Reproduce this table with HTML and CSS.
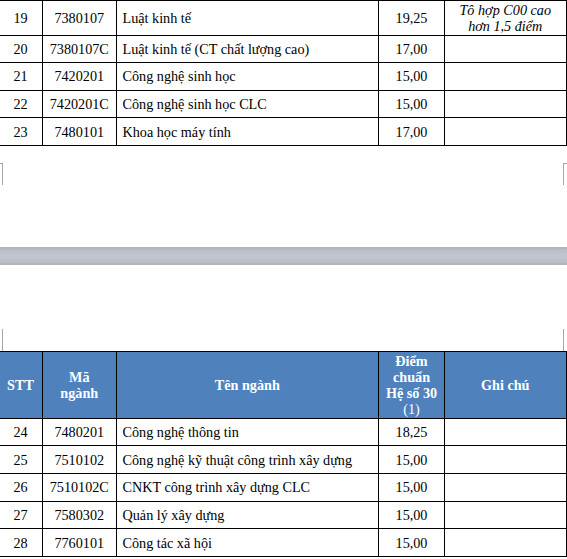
FILE: index.html
```html
<!DOCTYPE html>
<html lang="vi">
<head>
<meta charset="utf-8">
<title>Điểm chuẩn</title>
<link rel="stylesheet" href="styles.css">
</head>
<body>
<div class="sheet">
  <table class="grid">
    <colgroup>
      <col class="c1"><col class="c2"><col class="c3"><col class="c4"><col class="c5">
    </colgroup>
    <tbody>
      <tr class="tall">
        <td class="ctr">19</td><td class="ctr">7380107</td><td class="name">Luật kinh tế</td><td class="ctr">19,25</td><td class="note">Tô hợp C00 cao<br>hơn 1,5 điểm</td>
      </tr>
      <tr class="row">
        <td class="ctr">20</td><td class="ctr">7380107C</td><td class="name">Luật kinh tế (CT chất lượng cao)</td><td class="ctr">17,00</td><td></td>
      </tr>
      <tr class="row">
        <td class="ctr">21</td><td class="ctr">7420201</td><td class="name">Công nghệ sinh học</td><td class="ctr">15,00</td><td></td>
      </tr>
      <tr class="row">
        <td class="ctr">22</td><td class="ctr">7420201C</td><td class="name">Công nghệ sinh học CLC</td><td class="ctr">15,00</td><td></td>
      </tr>
      <tr class="row">
        <td class="ctr">23</td><td class="ctr">7480101</td><td class="name">Khoa học máy tính</td><td class="ctr">17,00</td><td></td>
      </tr>
    </tbody>
  </table>

  <div class="page-end">
    <div class="marks top-marks">
      <span class="mark mark-tl"></span>
      <span class="mark mark-tr"></span>
    </div>
  </div>

  <div class="page-gap"></div>

  <div class="page-start">
    <div class="marks bottom-marks">
      <span class="mark mark-bl"></span>
      <span class="mark mark-br"></span>
    </div>
  </div>

  <table class="grid">
    <colgroup>
      <col class="c1"><col class="c2"><col class="c3"><col class="c4"><col class="c5">
    </colgroup>
    <thead>
      <tr class="head">
        <th>STT</th><th>Mã<br>ngành</th><th>Tên ngành</th><th>Điểm<br>chuẩn<br>Hệ số 30<br><span class="reg">(1)</span></th><th>Ghi chú</th>
      </tr>
    </thead>
    <tbody>
      <tr class="row">
        <td class="ctr">24</td><td class="ctr">7480201</td><td class="name">Công nghệ thông tin</td><td class="ctr">18,25</td><td></td>
      </tr>
      <tr class="row">
        <td class="ctr">25</td><td class="ctr">7510102</td><td class="name">Công nghệ kỹ thuật công trình xây dựng</td><td class="ctr">15,00</td><td></td>
      </tr>
      <tr class="row">
        <td class="ctr">26</td><td class="ctr">7510102C</td><td class="name">CNKT công trình xây dựng CLC</td><td class="ctr">15,00</td><td></td>
      </tr>
      <tr class="row">
        <td class="ctr">27</td><td class="ctr">7580302</td><td class="name">Quản lý xây dựng</td><td class="ctr">15,00</td><td></td>
      </tr>
      <tr class="row">
        <td class="ctr">28</td><td class="ctr">7760101</td><td class="name">Công tác xã hội</td><td class="ctr">15,00</td><td></td>
      </tr>
    </tbody>
  </table>
</div>
</body>
</html>
```

FILE: styles.css
```css
html, body {
  margin: 0;
  padding: 0;
  background: #ffffff;
}

body {
  font-family: "Liberation Serif", "Times New Roman", serif;
  font-size: 14.2px;
  color: #000000;
}

.sheet {
  width: 567px;
  height: 559px;
  overflow: hidden;
}

.grid {
  border-collapse: collapse;
  table-layout: fixed;
  margin-left: -2px;
  width: 567.5px;
}

.c1 { width: 44px; }
.c2 { width: 73.5px; }
.c3 { width: 262.5px; }
.c4 { width: 66px; }
.c5 { width: 121.5px; }

.grid td,
.grid th {
  border: 1px solid #000000;
  padding: 0 2px;
  line-height: 16px;
  vertical-align: middle;
}

.grid .row {
  height: 27.6px;
}

.grid .tall {
  height: 34.5px;
}

.ctr {
  text-align: center;
}

.name {
  text-align: left;
  padding-left: 6px !important;
  white-space: nowrap;
}

.note {
  text-align: center;
  font-style: italic;
  line-height: 16px;
}

.head {
  height: 67px;
  background: #4f81bd;
  color: #ffffff;
}

.head th {
  font-weight: bold;
  text-align: center;
  line-height: 16px;
}

.head .reg {
  font-weight: normal;
}

.page-end {
  height: 101px;
  padding-top: 17px;
  box-sizing: border-box;
}

.page-gap {
  height: 18px;
  background: linear-gradient(to bottom, #aeafb9 0%, #bcbfc8 20%, #c3c6ce 50%, #bcbfc8 80%, #aeafb9 100%);
}

.page-start {
  height: 86px;
  display: flex;
  flex-direction: column;
  justify-content: flex-end;
}

.marks {
  display: flex;
  justify-content: space-between;
  height: 22px;
}

.mark {
  display: block;
  width: 3px;
  height: 22px;
  box-sizing: border-box;
}

.mark-tl {
  border-right: 1px solid #a6a6a6;
  border-top: 1px solid #a6a6a6;
}

.mark-tr {
  width: 4px;
  border-left: 1px solid #a6a6a6;
  border-top: 1px solid #a6a6a6;
}

.mark-bl {
  border-right: 1px solid #a6a6a6;
}

.mark-br {
  width: 4px;
  border-left: 1px solid #a6a6a6;
}
```
